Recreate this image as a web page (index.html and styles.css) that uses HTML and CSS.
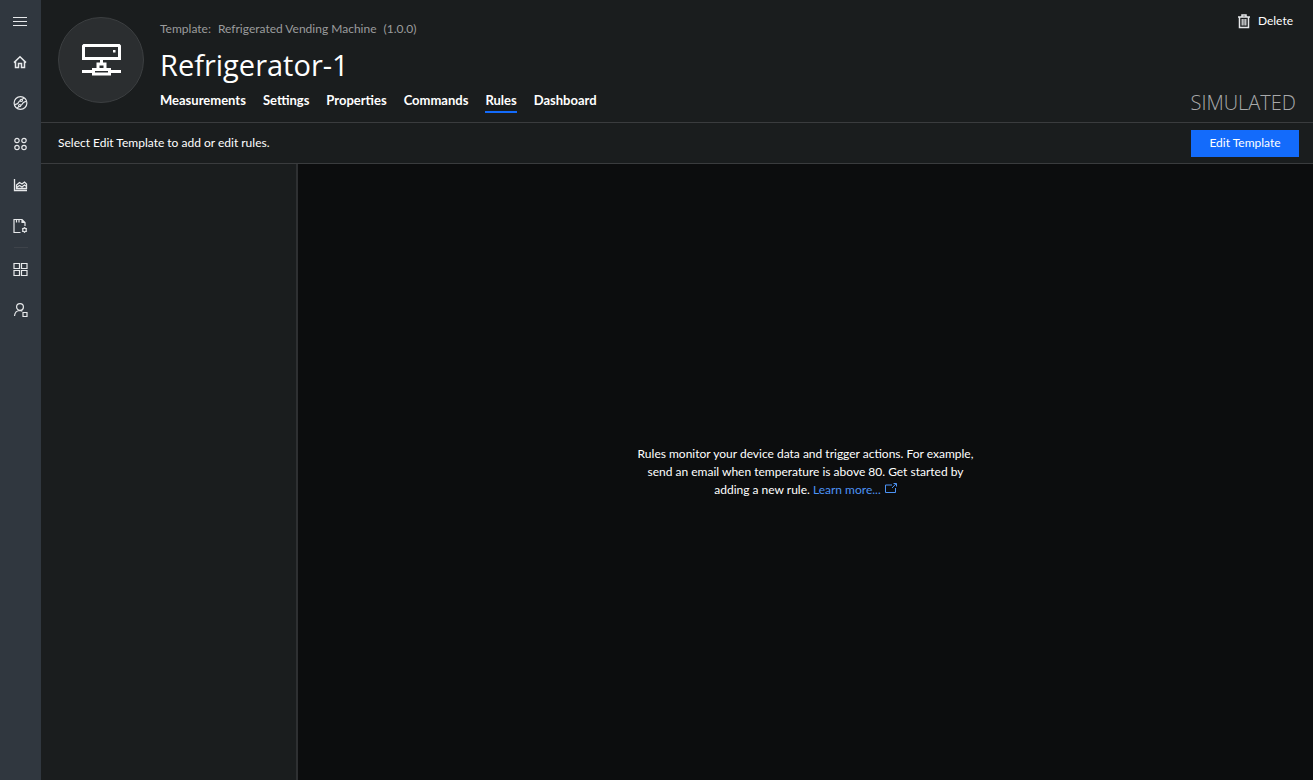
FILE: index.html
```html
<!DOCTYPE html>
<html lang="en">
<head>
<meta charset="utf-8">
<meta name="viewport" content="width=device-width, initial-scale=1">
<title>Refrigerator-1 - Rules</title>
<link rel="stylesheet" href="styles.css">
</head>
<body>
<div class="app">
  <nav class="rail" aria-label="Main">
    <button class="rail-item" type="button" aria-label="Menu">
      <svg class="icon" viewBox="0 0 16 16"><path d="M1 4.500h14M1 8.500h14M1 12.500h14"/></svg>
    </button>
    <a class="rail-item" href="#" aria-label="Home">
      <svg class="icon" viewBox="0 0 16 16"><path stroke-width="1.500" d="M2 8.600 8 2.800l6 5.800M3.500 7.500v6H6.500v-4h3v4h3v-6"/></svg>
    </a>
    <a class="rail-item" href="#" aria-label="Device explorer">
      <svg class="icon" viewBox="0 0 16 16"><circle cx="8.500" cy="8" r="6.400"/><circle cx="9.300" cy="5.400" r="1.100"/><circle cx="7.700" cy="10.600" r="1.100"/><path d="M8.200 5.700C6 6.400 6.800 8.300 5 8.900L2.500 9.800M8.800 10.300c2.200-.7 1.400-2.600 3.200-3.200l2.500-.9M6.900 11.400l-1.900 2M10.100 4.600l1.900-2"/></svg>
    </a>
    <a class="rail-item" href="#" aria-label="Device sets">
      <svg class="icon" viewBox="0 0 16 16"><circle cx="5" cy="4.500" r="2.200"/><circle cx="12" cy="4.500" r="2.200"/><circle cx="5" cy="11.500" r="2.200"/><circle cx="12" cy="11.500" r="2.200"/></svg>
    </a>
    <a class="rail-item" href="#" aria-label="Analytics">
      <svg class="icon" viewBox="0 0 16 16"><path stroke-width="1.300" d="M2.500 2v11.500h12.500M4.500 8l3-2.500L10 7l2.500-2 2 2v4.500h-10zM4.500 10.500l3-2L10 10l2.500-2 2 1.500"/></svg>
    </a>
    <a class="rail-item" href="#" aria-label="Jobs">
      <svg class="icon" viewBox="0 0 16 16"><path d="M8.500 14.500H2v-13h8l3 3V8M10 1.500v3h3M4.500 2v2.500M7 2v2.500"/><circle cx="12.500" cy="12" r="1.800"/><path d="M12.500 9.200v1M12.500 13.800v1M10.100 10.600l.9.500M14 12.900l.9.500M10.100 13.400l.9-.5M14 11.100l.9-.5"/></svg>
    </a>
    <hr class="rail-rule">
    <a class="rail-item" href="#" aria-label="Application builder">
      <svg class="icon" viewBox="0 0 16 16"><path d="M2 2.500h5.500v5H2zM9.500 2.500H15v5H9.500zM2 9.500h5.500v5H2zM9.500 9.500H15v5H9.500z"/></svg>
    </a>
    <a class="rail-item" href="#" aria-label="Administration">
      <svg class="icon" viewBox="0 0 16 16"><circle cx="8" cy="5" r="3.400"/><path d="M2.500 14c.3-3.300 2.300-5.400 5.500-5.500 1 0 1.700.3 2.300.8M11 10.500h4v4h-4z"/></svg>
    </a>
  </nav>

  <main class="page">
    <header class="header">
      <div class="avatar">
        <svg class="avatar-icon" viewBox="0 0 40 34"><g transform="translate(0 1)" fill="none" stroke="#fff" stroke-width="3"><path d="M3 1.500h35l.500.500v12.500h-36V2z"/><path d="M20.500 15v5M17 25.500V20h7v5.500M12.500 25.500h16V30h-16zM1 27.500h10M30 27.500h10"/><path d="M32 6h2.500v2.500H32z" fill="#fff" stroke="none"/></g></svg>
      </div>
      <div class="heading">
        <p class="template"><span>Template:</span><span>Refrigerated Vending Machine</span><span>(1.0.0)</span></p>
        <h1 class="title">Refrigerator-1</h1>
        <nav class="tabs" aria-label="Device">
          <a class="tab" href="#">Measurements</a>
          <a class="tab" href="#">Settings</a>
          <a class="tab" href="#">Properties</a>
          <a class="tab" href="#">Commands</a>
          <a class="tab tab-active" href="#" aria-current="page">Rules</a>
          <a class="tab" href="#">Dashboard</a>
        </nav>
      </div>
      <div class="header-side">
        <button class="delete" type="button">
          <svg class="icon" viewBox="0 0 16 16"><path stroke-width="1.500" d="M2 4h12M6 4V2h4v2M3.500 4v10.500h9V4"/><path d="M6.200 6v6.500M8 6v6.500M9.800 6v6.500"/></svg>
          <span>Delete</span>
        </button>
        <span class="status">SIMULATED</span>
      </div>
    </header>

    <div class="toolbar">
      <span>Select Edit Template to add or edit rules.</span>
      <button class="primary" type="button">Edit Template</button>
    </div>

    <div class="content">
      <aside class="rules-list" aria-label="Rules"></aside>
      <section class="empty">
        <p class="empty-text"><span>Rules monitor your device data and trigger actions. For example, send an email when temperature is above 80. Get started by adding a new rule.</span> <a class="learn" href="#">Learn more...<svg class="external" viewBox="0 0 12 10"><path d="M7 2H.5v7.500h10V5M7 5l4-4.200M8.500.5h3V3.500"/></svg></a></p>
      </section>
    </div>
  </main>
</div>
</body>
</html>
```

FILE: styles.css
```css
* {
  box-sizing: border-box;
}

body {
  margin: 0;
  background: #0c0d0e;
  color: #fff;
  font: 12px/18px Lato, "Open Sans", sans-serif;
}

button {
  border: 0;
  padding: 0;
  background: none;
  color: inherit;
  font: inherit;
  cursor: pointer;
}

a {
  color: inherit;
  text-decoration: none;
}

p,
h1 {
  margin: 0;
}

.app {
  display: flex;
  min-height: 100vh;
}

.rail {
  display: flex;
  flex-direction: column;
  flex: none;
  width: 41px;
  background: #30373f;
}

.rail-item {
  display: flex;
  align-items: center;
  justify-content: center;
  height: 41px;
  padding-right: 1px;
}

.rail-rule {
  width: 14px;
  height: 1px;
  margin: 1px auto 0;
  border: 0;
  background: #3e434a;
}

.icon {
  width: 16px;
  height: 16px;
  fill: none;
  stroke: #e6e8ea;
  stroke-width: 1.2;
}

.page {
  display: flex;
  flex: 1;
  flex-direction: column;
  min-width: 0;
}

.header {
  display: flex;
  gap: 16px;
  min-height: 123px;
  padding: 0 17px;
  border-bottom: 1px solid #3a3c3e;
  background: #1a1d1e;
}

.avatar {
  display: flex;
  align-items: center;
  justify-content: center;
  flex: none;
  width: 86px;
  height: 86px;
  margin-top: 17px;
  border: 1px solid #3c3f41;
  border-radius: 50%;
  background: #2b2e30;
}

.avatar-icon {
  width: 40px;
  height: 34px;
}

.heading {
  padding-top: 20px;
}

.template {
  display: flex;
  gap: 7px;
  color: #9b9c9d;
}

.title {
  margin-top: 4px;
  font-family: "Open Sans", sans-serif;
  font-size: 29px;
  font-weight: 400;
  line-height: 46px;
}

.tabs {
  display: flex;
  gap: 17px;
  margin-top: 3px;
  font-size: 13px;
}

.tab {
  height: 22px;
  border-bottom: 2px solid transparent;
  font-weight: 700;
}

.tab-active {
  border-color: #136bfb;
}

.header-side {
  display: flex;
  flex-direction: column;
  align-items: flex-end;
  justify-content: space-between;
  margin-left: auto;
  padding: 12px 0 4px;
}

.delete {
  display: flex;
  align-items: center;
  gap: 6px;
  margin-right: 3px;
}

.status {
  color: #a8a9aa;
  font-family: "Open Sans", sans-serif;
  font-size: 20px;
  font-weight: 300;
  line-height: 30px;
}

.toolbar {
  display: flex;
  align-items: center;
  justify-content: space-between;
  min-height: 41px;
  padding: 0 14px 0 17px;
  border-bottom: 1px solid #3a3c3e;
  background: #1a1d1e;
}

.primary {
  min-width: 108px;
  height: 27px;
  background: #136bfb;
}

.content {
  display: flex;
  flex: 1;
}

.rules-list {
  flex: none;
  width: 257px;
  border-right: 2px solid #2e3032;
  background: #1a1d1e;
}

.empty {
  display: flex;
  flex: 1;
  align-items: center;
  justify-content: center;
  padding: 16px;
}

.empty-text {
  max-width: 345px;
  text-align: center;
}

.learn {
  display: inline-block;
  color: #4c93f5;
}

.external {
  width: 12px;
  height: 10px;
  margin-left: 4px;
  vertical-align: 1px;
  fill: none;
  stroke: #4c93f5;
}
```
